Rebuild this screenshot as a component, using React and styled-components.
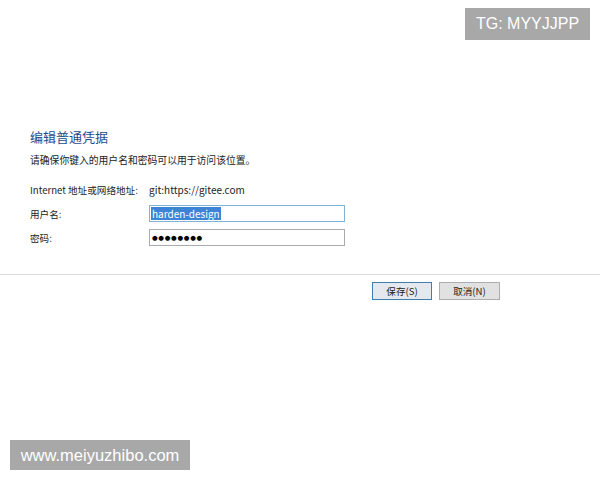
import React from "react";
import styled, { createGlobalStyle } from "styled-components";

const Global = createGlobalStyle`
  html, body { margin: 0; padding: 0; background: #fff; }
  body { font-family: "Noto Sans CJK SC", "Noto Sans", sans-serif; }
`;

const Page = styled.div`
  position: relative;
  width: 600px;
  height: 480px;
  background: #fff;
  overflow: hidden;
  display: flex;
  flex-direction: column;
`;

const Content = styled.div`
  padding: 127px 0 0 30px;
  display: flex;
  flex-direction: column;
`;

const Title = styled.h1`
  margin: 0;
  font-size: 13px;
  line-height: 20px;
  font-weight: 400;
  color: #1f4a8c;
`;

const Subtitle = styled.p`
  margin: 6px 0 0;
  font-size: 9.8px;
  line-height: 14px;
  color: #222;
`;

const Form = styled.div`
  margin-top: 15px;
  display: grid;
  grid-template-columns: 119px 196px;
  grid-auto-rows: auto;
  row-gap: 7px;
  align-items: center;
`;

const Label = styled.span`
  font-size: 9.6px;
  line-height: 16px;
  color: #222;
`;

const Value = styled.span`
  font-size: 10px;
  line-height: 16px;
  color: #222;
`;

const Field = styled.div`
  box-sizing: border-box;
  height: 17px;
  border: 1px solid ${(p) => (p.$focused ? "#7fb2d8" : "#a9abae")};
  background: #fff;
  display: flex;
  align-items: center;
  padding: 0 1px;
  font-size: 10px;
  color: #111;
`;

const Selected = styled.span`
  background: #3b84d6;
  color: #fff;
  line-height: 13px;
  padding: 0 1px;
`;

const Dots = styled.span`
  font-family: "DejaVu Sans", sans-serif;
  font-size: 6.5px;
  letter-spacing: 0.7px;
  color: #000;
  padding-left: 1px;
`;

const Separator = styled.hr`
  margin: 28px 0 0;
  border: 0;
  border-top: 1px solid #dcdcdc;
  width: 100%;
`;

const ButtonRow = styled.div`
  display: flex;
  justify-content: flex-end;
  gap: 7px;
  padding: 7px 100px 0 0;
`;

const Button = styled.button`
  box-sizing: border-box;
  width: ${(p) => (p.$primary ? "60px" : "61px")};
  height: 18px;
  padding: 0;
  border: 1px solid ${(p) => (p.$primary ? "#3e7fb3" : "#adadad")};
  background: ${(p) => (p.$primary ? "#e5e9ed" : "#e1e1e1")};
  font-family: "Noto Sans CJK SC", sans-serif;
  font-size: 9.6px;
  line-height: 16px;
  color: #222;
`;

const Watermark = styled.div`
  position: absolute;
  background: #a8a8a8;
  color: #fff;
  font-family: "Liberation Sans", Arial, sans-serif;
  font-size: ${(p) => (p.$top ? "16px" : "16.5px")};
  display: flex;
  align-items: center;
  justify-content: center;
  ${(p) =>
    p.$top
      ? "top: 8px; right: 10px; width: 125px; height: 32px;"
      : "left: 10px; top: 440px; width: 180px; height: 30px;"}
`;

export default function App() {
  return (
    <>
      <Global />
      <Page>
        <Content>
          <Title>编辑普通凭据</Title>
          <Subtitle>请确保你键入的用户名和密码可以用于访问该位置。</Subtitle>
          <Form>
            <Label>Internet 地址或网络地址:</Label>
            <Value>git:https://gitee.com</Value>
            <Label>用户名:</Label>
            <Field $focused>
              <Selected>harden-design</Selected>
            </Field>
            <Label>密码:</Label>
            <Field>
              <Dots>●●●●●●●●</Dots>
            </Field>
          </Form>
        </Content>
        <Separator />
        <ButtonRow>
          <Button $primary>保存(S)</Button>
          <Button>取消(N)</Button>
        </ButtonRow>
        <Watermark $top>TG: MYYJJPP</Watermark>
        <Watermark>www.meiyuzhibo.com</Watermark>
      </Page>
    </>
  );
}
